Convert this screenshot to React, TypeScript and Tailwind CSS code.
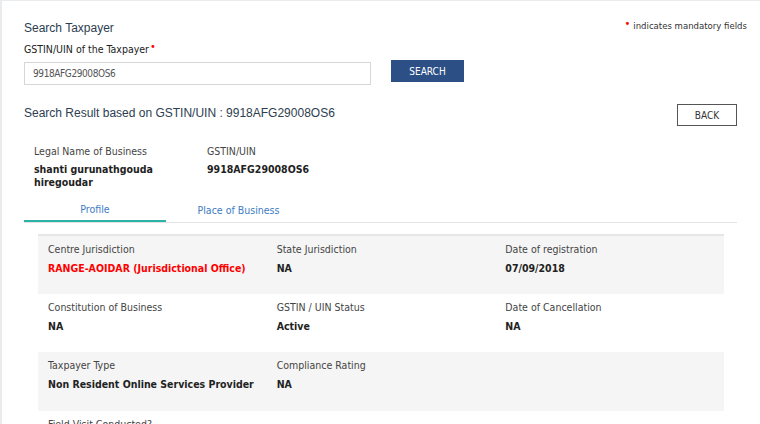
import React from "react";

const T = { fontFamily: '"DejaVu Sans Condensed", "DejaVu Sans", Verdana, sans-serif' };
const A = { fontFamily: '"Liberation Sans", Arial, sans-serif' };

function Cell({ label, value, red }: { label: string; value?: string; red?: boolean }) {
  return (
    <div className="px-[10px] pt-[6px]">
      <div className="text-[10.5px] leading-[14px] text-[#444]" style={T}>{label}</div>
      {value && (
        <div
          className={`mt-[5px] text-[10.5px] leading-[14px] font-bold whitespace-nowrap ${red ? "text-[#f00]" : "text-[#222]"}`}
          style={T}
        >
          {value}
        </div>
      )}
    </div>
  );
}

export default function App() {
  return (
    <div className="w-[760px] h-[424px] overflow-hidden bg-white border-l-2 border-t border-[#e8ecef]">
      <div className="pl-[22px] pr-[23px] pt-[19px]">
        <div className="flex justify-between items-start">
          <div className="text-[12px] leading-[16px] text-[#2c3e50]" style={A}>Search Taxpayer</div>
          <div className="-mr-[10px] mt-[-1px] text-[9.5px] leading-[14px] text-[#333] flex items-start" style={T}>
            <span className="text-[#f00] text-[11px] leading-[10px] mr-[3px]">•</span>indicates mandatory fields
          </div>
        </div>
        <div className="flex items-start mt-[6px]">
          <div className="w-[347px]">
            <div className="text-[10.5px] leading-[14px] text-[#222] flex items-start" style={T}>
              GSTIN/UIN of the Taxpayer<span className="text-[#f00] text-[11px] leading-[10px] ml-[1px]">•</span>
            </div>
            <div className="mt-[6px] h-[23px] border border-[#d6d6d6] flex items-center pl-[8px] text-[10px] tracking-[-0.4px] text-[#555]" style={T}>
              9918AFG29008OS6
            </div>
          </div>
          <button
            className="ml-[20px] mt-[18px] w-[73px] h-[22px] bg-[#2c4f86] text-white text-[10px] flex items-center justify-center"
            style={T}
          >
            SEARCH
          </button>
        </div>
        <div className="flex justify-between items-start mt-[19px]">
          <div className="mt-[1px] text-[12px] leading-[16px] text-[#2c3e50]" style={A}>
            Search Result based on GSTIN/UIN : 9918AFG29008OS6
          </div>
          <button
            className="w-[60px] h-[22px] bg-white border border-[#555] text-[#333] text-[10px] flex items-center justify-center"
            style={T}
          >
            BACK
          </button>
        </div>
        <div className="flex mt-[18px] pl-[10px]">
          <div className="w-[173px]">
            <div className="text-[10.5px] leading-[14px] text-[#444]" style={T}>Legal Name of Business</div>
            <div className="mt-[5px] text-[10.5px] leading-[13px] font-bold text-[#222]" style={T}>
              shanti gurunathgouda
              <br />
              hiregoudar
            </div>
          </div>
          <div>
            <div className="text-[10.5px] leading-[14px] text-[#444]" style={T}>GSTIN/UIN</div>
            <div className="mt-[5px] text-[10.5px] leading-[13px] font-bold text-[#222]" style={T}>9918AFG29008OS6</div>
          </div>
        </div>
        <div className="flex mt-[13px] border-b border-[#e3e3e3]">
          <div className="w-[142px] h-[20px] border-b-2 border-[#2ab3a6] -mb-[1px] text-center text-[10.5px] leading-[14px] text-[#3d7cc4]" style={T}>
            Profile
          </div>
          <div className="w-[145px] h-[20px] text-center text-[10.5px] leading-[14px] pt-[1px] text-[#3d7cc4]" style={T}>
            Place of Business
          </div>
        </div>
        <div className="ml-[14px] w-[686px] mt-[11px] border-t-2 border-[#e6e6e6]">
          <div className="grid grid-cols-3 h-[58px] bg-[#f5f5f5]">
            <Cell label="Centre Jurisdiction" value="RANGE-AOIDAR (Jurisdictional Office)" red />
            <Cell label="State Jurisdiction" value="NA" />
            <Cell label="Date of registration" value="07/09/2018" />
          </div>
          <div className="grid grid-cols-3 h-[58px] bg-white">
            <Cell label="Constitution of Business" value="NA" />
            <Cell label="GSTIN / UIN Status" value="Active" />
            <Cell label="Date of Cancellation" value="NA" />
          </div>
          <div className="grid grid-cols-3 h-[59px] bg-[#f5f5f5]">
            <Cell label="Taxpayer Type" value="Non Resident Online Services Provider" />
            <Cell label="Compliance Rating" value="NA" />
            <div />
          </div>
          <div className="grid grid-cols-3 h-[58px] bg-white">
            <Cell label="Field Visit Conducted?" />
          </div>
        </div>
      </div>
    </div>
  );
}
